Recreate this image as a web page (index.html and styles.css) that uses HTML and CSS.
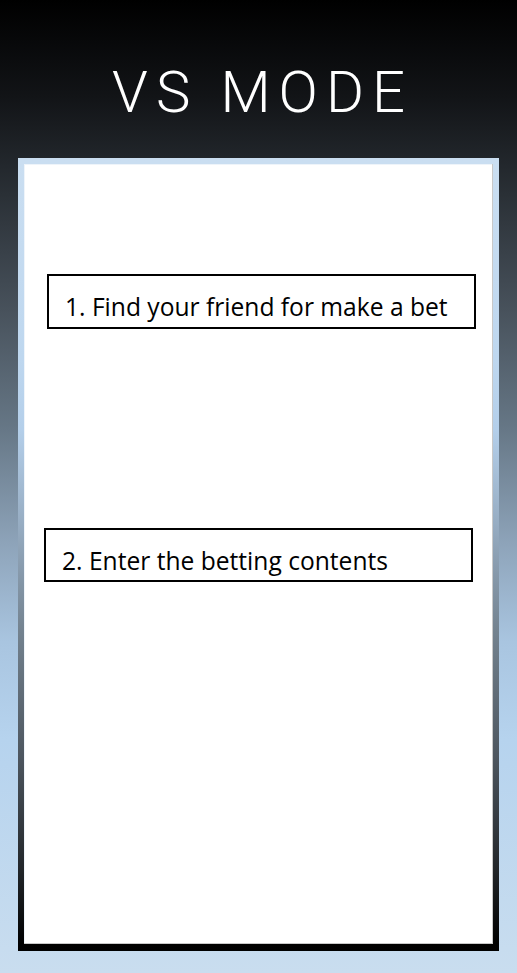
FILE: index.html
```html
<!DOCTYPE html>
<html lang="en">
<head>
<meta charset="utf-8">
<title>VS MODE</title>
<link rel="stylesheet" href="styles.css">
</head>
<body>
<div class="page">
  <header class="header">
    <h1 class="title">VS MODE</h1>
  </header>
  <main class="card">
    <div class="card-inner">
      <div class="step step-one">1. Find your friend for make a bet</div>
      <div class="step step-two">2. Enter the betting contents</div>
    </div>
  </main>
</div>
</body>
</html>
```

FILE: styles.css
```css
html, body {
  margin: 0;
  padding: 0;
}

body {
  width: 517px;
  height: 973px;
  overflow: hidden;
  background: linear-gradient(to bottom,
    #000000 0%,
    #121417 10%,
    #2a3036 20%,
    #48525c 32%,
    #667786 44%,
    #8ea4ba 56%,
    #a9c5e0 66%,
    #b6d3ee 76%,
    #c9ddef 100%);
  font-family: "Open Sans", "Noto Sans CJK KR", sans-serif;
}

.page {
  display: flex;
  flex-direction: column;
  height: 973px;
}

.header {
  height: 158px;
  display: flex;
  align-items: center;
  justify-content: center;
}

.title {
  margin: 0;
  padding-left: 8px;
  padding-top: 26px;
  font-family: Roboto, "Open Sans", sans-serif;
  font-weight: 300;
  font-size: 58px;
  line-height: 1;
  letter-spacing: 8px;
  color: #ffffff;
}

.card {
  margin: 0 18px;
  width: 481px;
  height: 793px;
  box-sizing: border-box;
  border-style: solid;
  border-width: 6px 6px 7px 6px;
  border-image: linear-gradient(to bottom,
    #cadef1 0%,
    #bed7ef 25%,
    #b4cfea 34%,
    #97adc3 46%,
    #73828f 60%,
    #4d565f 76%,
    #23272b 90%,
    #000000 100%) 1;
}

.card-inner {
  height: 100%;
  box-sizing: border-box;
  background: #ffffff;
  box-shadow: inset -1px -1px 0 #c8c8c8, inset 1px 1px 0 #eef4fa;
  padding-top: 110px;
  display: flex;
  flex-direction: column;
}

.step {
  width: 429px;
  box-sizing: border-box;
  border: 2px solid #000000;
  display: flex;
  align-items: center;
  padding-left: 16px;
  padding-top: 10px;
  font-size: 24.6px;
  color: #000000;
  white-space: nowrap;
}

.step-one {
  margin-left: 23px;
  height: 55px;
}

.step-two {
  margin-left: 20px;
  margin-top: 199px;
  height: 54px;
}
```
